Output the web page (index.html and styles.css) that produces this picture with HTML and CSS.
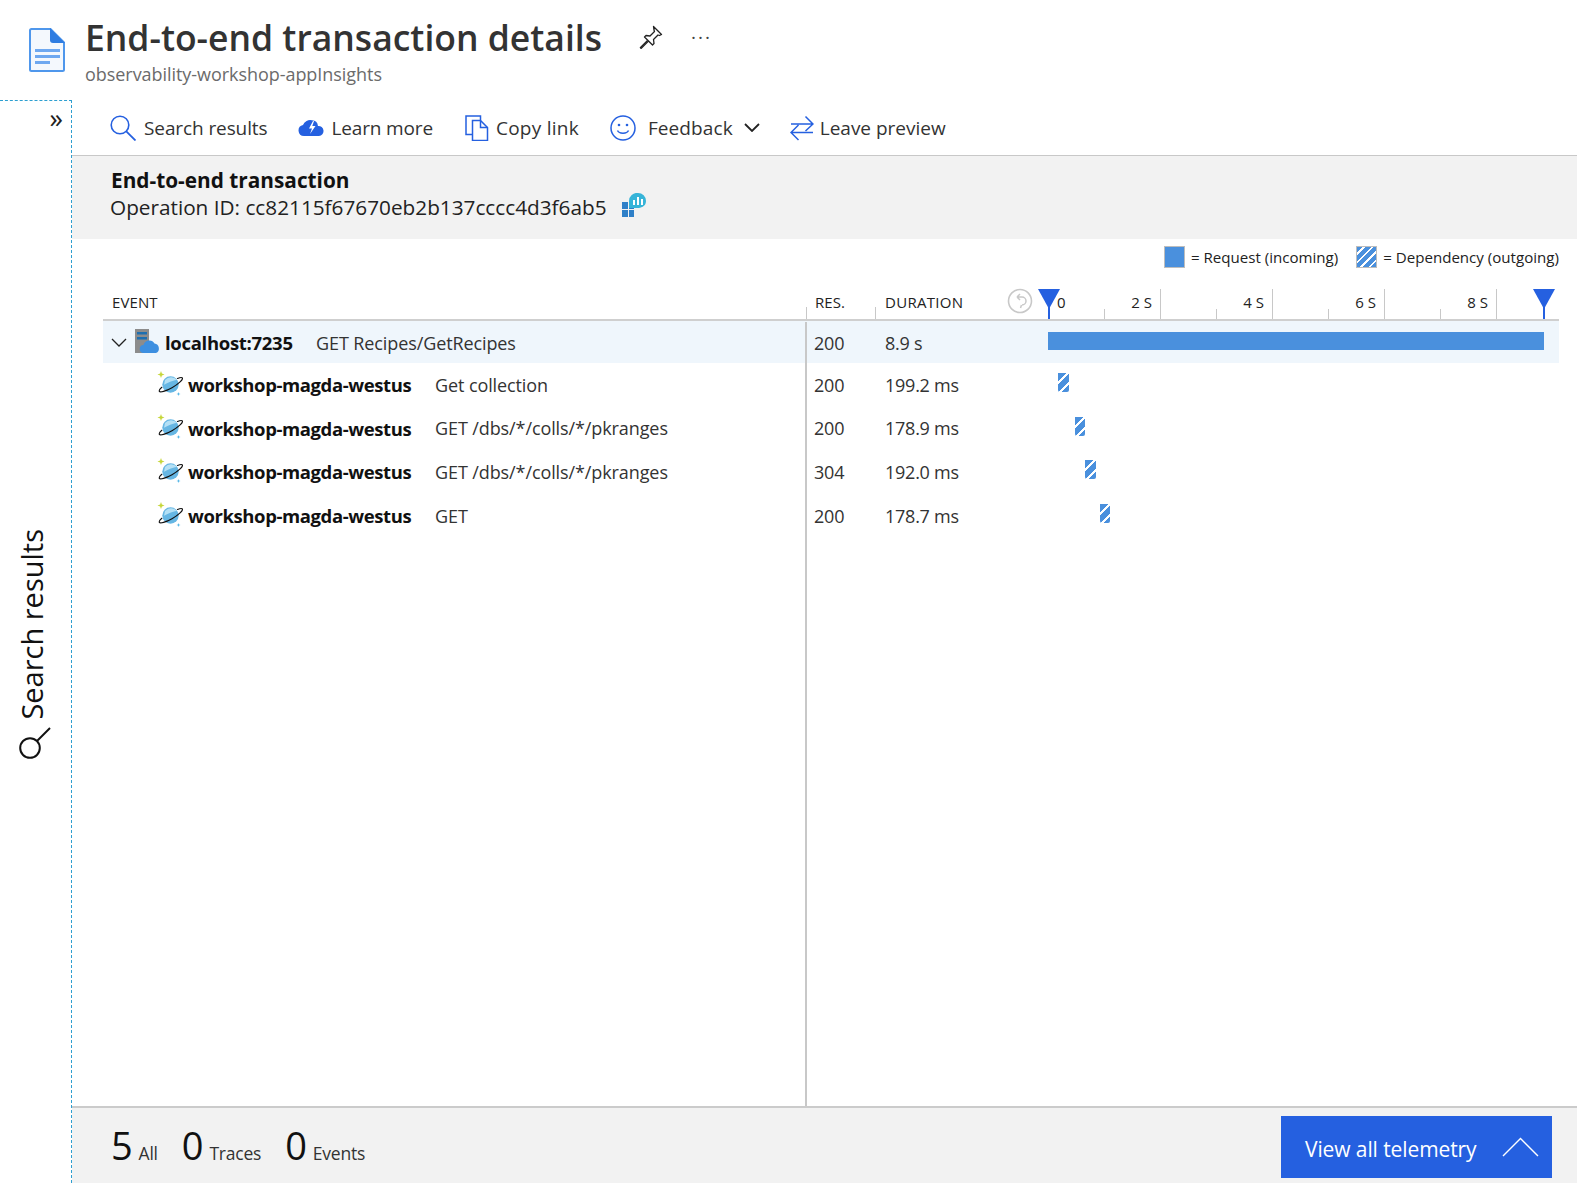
FILE: index.html
```html
<!DOCTYPE html>
<html lang="en">
<head>
<meta charset="utf-8">
<title>End-to-end transaction details</title>
<link rel="stylesheet" href="styles.css">
</head>
<body>
<svg class="defs" width="0" height="0" aria-hidden="true">
  <defs>
    <symbol id="cosmos" viewBox="0 0 26 26">
      <circle cx="13.500" cy="13.500" r="8.200" fill="#66b6e3"/>
      <path d="M8 9a8.200 8.200 0 0 1 12-.2c-3.500.8-8.500 2.200-13 5z" fill="#b4e0f5"/>
      <path d="M20.500 7.500c2.800-1.100 4.600-1.100 4.900-.4.700 1.600-4.100 6-10.400 9.600-6.300 3.600-12 5-12.700 3.600-.4-.8.500-2.200 2.500-4" fill="none" stroke="#111" stroke-width="1.200" stroke-linecap="round"/>
      <path d="M4 0l.9 2.600 2.600.9-2.600.9-.9 2.600-.9-2.600-2.600-.9 2.600-.9z" fill="#c6d63a"/>
      <path d="M21.500 21l.5 1.500 1.500.5-1.500.5-.5 1.500-.5-1.500-1.500-.5 1.500-.5z" fill="#50b4e6"/>
    </symbol>
  </defs>
</svg>

<header class="page-head">
  <svg class="doc-icon" width="36" height="44" viewBox="0 0 36 44">
    <path d="M2.500 1h19L35 14.500V41.500a1.500 1.500 0 0 1-1.500 1.500h-31A1.500 1.500 0 0 1 1 41.500V2.500A1.500 1.500 0 0 1 2.500 1z" fill="#f4f8fd" stroke="#4f97ec" stroke-width="2"/>
    <path d="M21 0l15 15H24a3 3 0 0 1-3-3z" fill="#2f7de1"/>
    <path d="M6 21h25v3H6zM6 27h25v3H6zM6 33h15v3H6z" fill="#6ea8f0"/>
  </svg>
  <div class="head-text">
    <div class="title-row">
      <h1 class="page-title">End-to-end transaction details</h1>
      <svg class="pin-icon" width="24" height="24" viewBox="0 0 24 24">
        <path d="M14.500 1.500l8 8-2 1-1.500-.5-4.500 4.500.5 4-1.500 1.500-4-4-7.500 7.500 7.500-7.500-4-4 1.500-1.500 4 .5 4.500-4.500-.5-1.500z" fill="none" stroke="#222" stroke-width="1.300" stroke-linejoin="round"/>
        <path d="M1 23l7.500-7.500" stroke="#222" stroke-width="1.300"/>
      </svg>
      <span class="more-dots">···</span>
    </div>
    <div class="subtitle">observability-workshop-appInsights</div>
  </div>
</header>

<div class="workspace">
  <aside class="side-panel">
    <span class="side-expand">»</span>
    <div class="side-label">
      <svg width="32" height="32" viewBox="0 0 32 32" class="side-search">
        <circle cx="11" cy="21" r="9.800" fill="none" stroke="#111" stroke-width="2"/>
        <path d="M18 14L31 1" stroke="#111" stroke-width="2"/>
      </svg>
      <span class="side-text">Search results</span>
    </div>
  </aside>

  <main class="content">
    <nav class="toolbar">
      <span class="tool tool-search">
        <svg width="26" height="26" viewBox="0 0 26 26"><circle cx="10" cy="10" r="8.800" fill="none" stroke="#2560e0" stroke-width="1.600"/><path d="M16.300 16.300L25.500 25.500" stroke="#2560e0" stroke-width="1.800"/></svg>
        Search results
      </span>
      <span class="tool tool-learn">
        <svg width="26" height="16" viewBox="0 0 26 16"><path d="M6 16a5.500 5.500 0 0 1-1-10.900A7.500 7.500 0 0 1 14 .3a6.500 6.500 0 0 1 6 5.700A5 5 0 0 1 21 16z" fill="#2560e0"/><path d="M15 1l-4 7.500h3L12 14l5.500-8h-3.200L16 1z" fill="#fff"/></svg>
        Learn more
      </span>
      <span class="tool tool-copy">
        <svg width="24" height="26" viewBox="0 0 24 26"><path d="M15.500 5V1H5.500L1 1v18.500h6.500" fill="none" stroke="#2560e0" stroke-width="1.500"/><path d="M7.500 5.500h8l7 7v13h-15z" fill="#fff" stroke="#2560e0" stroke-width="1.500"/><path d="M15.500 5.500v7h7" fill="none" stroke="#2560e0" stroke-width="1.500"/></svg>
        Copy link
      </span>
      <span class="tool tool-feedback">
        <svg width="26" height="26" viewBox="0 0 26 26"><circle cx="13" cy="13" r="12" fill="none" stroke="#2560e0" stroke-width="1.500"/><circle cx="9" cy="10" r="1.300" fill="#2560e0"/><circle cx="17" cy="10" r="1.300" fill="#2560e0"/><path d="M7.500 15.500c1.500 3.500 9.500 3.500 11 0" fill="none" stroke="#2560e0" stroke-width="1.500"/></svg>
        <span class="feedback-text">Feedback</span>
        <svg class="feedback-caret" width="16" height="9" viewBox="0 0 16 9"><path d="M1 1l7 7 7-7" fill="none" stroke="#222" stroke-width="1.800"/></svg>
      </span>
      <span class="tool tool-leave">
        <svg width="24" height="26" viewBox="0 0 24 26"><path d="M1 9h21.500M15.500 1.500L23 9l-7.500 7M23 17.500H1.500M8.500 10L1 17.500 8.500 25" fill="none" stroke="#2560e0" stroke-width="1.500"/></svg>
        Leave preview
      </span>
    </nav>

    <section class="summary">
      <div class="summary-title">End-to-end transaction</div>
      <div class="summary-id">
        Operation ID: cc82115f67670eb2b137cccc4d3f6ab5
        <svg width="25" height="24" viewBox="0 0 25 24">
          <path d="M1 9h6v7H1zM8 9h5v7H8zM1 17h6v7H1zM8 17h5v7H8z" fill="#2f80c8"/>
          <path d="M17 0a8 8 0 0 1 8 8c0 6-6 7-8 7H8V8a8 8 0 0 1 9-8z" fill="#37b4d8"/>
          <path d="M12 7h2v5h-2zM16 4h2v8h-2zM20 6h2v6h-2z" fill="#fff"/>
        </svg>
      </div>
    </section>

    <section class="details">
      <div class="legend">
        <span class="swatch swatch-request"></span><span class="legend-text">= Request (incoming)</span>
        <span class="swatch swatch-dep"></span><span class="legend-text">= Dependency (outgoing)</span>
      </div>

      <div class="grid-row grid-head">
        <div class="head-cell head-event">EVENT</div>
        <div class="head-cell head-sep">RES.</div>
        <div class="head-cell head-sep head-duration">
          DURATION
          <svg class="reset-icon" width="26" height="26" viewBox="0 0 26 26"><circle cx="13" cy="13" r="11.500" fill="none" stroke="#c8c8c8" stroke-width="1.600"/><path d="M10 9h5a4 4 0 0 1 0 8M10 9l3-3M10 9l3 3M14.500 17l-1 3" fill="none" stroke="#c8c8c8" stroke-width="1.500"/></svg>
        </div>
        <div class="ruler">
          <div class="seg"><span class="half"><span class="tick-label first">0</span></span><span class="half label-end"><span class="tick-label">2 S</span></span></div>
          <div class="seg"><span class="half"></span><span class="half label-end"><span class="tick-label">4 S</span></span></div>
          <div class="seg"><span class="half"></span><span class="half label-end"><span class="tick-label">6 S</span></span></div>
          <div class="seg"><span class="half"></span><span class="half label-end"><span class="tick-label">8 S</span></span></div>
          <span class="handle handle-start"></span>
          <span class="handle handle-end"></span>
        </div>
      </div>

      <div class="rows">
        <div class="grid-row row row-selected">
          <div class="cell-event">
            <svg class="chevron" width="16" height="9" viewBox="0 0 16 9"><path d="M1 1l7 7 7-7" fill="none" stroke="#222" stroke-width="1.300"/></svg>
            <svg class="server-icon" width="25" height="25" viewBox="0 0 25 25">
              <rect x="0" y="0" width="14" height="24" fill="#8c8c8c"/>
              <rect x="2" y="3" width="10" height="2.500" fill="#1e6fb0"/>
              <rect x="2" y="8" width="10" height="2.500" fill="#1e6fb0"/>
              <path d="M9 24a4 4 0 0 1-.5-8 6 6 0 0 1 11-1.500A5 5 0 0 1 21 24z" fill="#3d8fe0"/>
            </svg>
            <span class="name name-root">localhost:7235</span>
            <span class="op">GET Recipes/GetRecipes</span>
          </div>
          <div class="cell">200</div>
          <div class="cell">8.9 s</div>
          <div class="track"><span class="bar bar-request"></span></div>
        </div>

        <div class="grid-row row">
          <div class="cell-event child"><svg class="db-icon" width="26" height="26"><use href="#cosmos"/></svg><span class="name">workshop-magda-westus</span><span class="op">Get collection</span></div>
          <div class="cell">200</div>
          <div class="cell">199.2 ms</div>
          <div class="track"><span class="bar bar-dep" style="margin-left:10px;width:11px"></span></div>
        </div>
        <div class="grid-row row">
          <div class="cell-event child"><svg class="db-icon" width="26" height="26"><use href="#cosmos"/></svg><span class="name">workshop-magda-westus</span><span class="op">GET /dbs/*/colls/*/pkranges</span></div>
          <div class="cell">200</div>
          <div class="cell">178.9 ms</div>
          <div class="track"><span class="bar bar-dep" style="margin-left:27px;width:10px"></span></div>
        </div>
        <div class="grid-row row">
          <div class="cell-event child"><svg class="db-icon" width="26" height="26"><use href="#cosmos"/></svg><span class="name">workshop-magda-westus</span><span class="op">GET /dbs/*/colls/*/pkranges</span></div>
          <div class="cell">304</div>
          <div class="cell">192.0 ms</div>
          <div class="track"><span class="bar bar-dep" style="margin-left:37px;width:11px"></span></div>
        </div>
        <div class="grid-row row">
          <div class="cell-event child"><svg class="db-icon" width="26" height="26"><use href="#cosmos"/></svg><span class="name">workshop-magda-westus</span><span class="op">GET</span></div>
          <div class="cell">200</div>
          <div class="cell">178.7 ms</div>
          <div class="track"><span class="bar bar-dep" style="margin-left:52px;width:10px"></span></div>
        </div>
        <div class="grid-row filler"><div class="cell-event"></div></div>
      </div>
    </section>

    <footer class="footer">
      <div class="counts">
        <span class="count"><b>5</b>All</span>
        <span class="count"><b>0</b>Traces</span>
        <span class="count"><b>0</b>Events</span>
      </div>
      <button class="telemetry-btn" type="button">
        <span class="telemetry-text">View all telemetry</span>
        <svg width="37" height="20" viewBox="0 0 37 20"><path d="M1 19L18.500 1.500 36 19" fill="none" stroke="#fff" stroke-width="1.400"/></svg>
      </button>
    </footer>
  </main>
</div>
</body>
</html>
```
FILE: styles.css
```css
* { box-sizing: border-box; }
html, body { margin: 0; height: 100%; }
body {
  width: 1577px;
  height: 1183px;
  overflow: hidden;
  display: flex;
  flex-direction: column;
  background: #fff;
  color: #1a1a1a;
  font-family: "Open Sans", "Noto Sans", "Liberation Sans", sans-serif;
}
.defs { position: absolute; }

/* page head */
.page-head {
  height: 100px;
  flex: none;
  display: flex;
  align-items: flex-start;
  padding-left: 29px;
}
.doc-icon { margin-top: 28px; flex: none; }
.head-text { margin-left: 20px; padding-top: 11px; }
.title-row { display: flex; align-items: center; height: 51px; }
.page-title {
  margin: 0;
  font-size: 35.500px;
  line-height: 50px;
  font-weight: 600;
  color: #333;
  white-space: nowrap;
}
.pin-icon { margin-left: 37px; }
.more-dots { margin-left: 28px; font-size: 19px; color: #444; letter-spacing: 2px; }
.subtitle { font-size: 18px; line-height: 24px; color: #6b6b6b; letter-spacing: -0.05px; }

/* workspace */
.workspace { flex: 1; display: flex; min-height: 0; }
.side-panel {
  width: 72px;
  flex: none;
  border-top: 1px dashed #2d9fd0;
  border-right: 1px dashed #2d9fd0;
  display: flex;
  flex-direction: column;
  position: relative;
}
.side-expand {
  position: absolute;
  top: 0;
  right: 8px;
  font-size: 27px;
  line-height: 34px;
  color: #222;
}
.side-label {
  flex: 1;
  display: flex;
  flex-direction: column-reverse;
  align-items: center;
  justify-content: center;
  padding: 4px 8px 0 0;
  gap: 8px;
}
.side-text {
  writing-mode: vertical-rl;
  transform: rotate(180deg);
  font-size: 29px;
  line-height: 34px;
  color: #111;
  white-space: nowrap;
}
.side-search { margin-left: 6px; }

.content { flex: 1; min-width: 0; display: flex; flex-direction: column; }

/* toolbar */
.toolbar {
  height: 56px;
  flex: none;
  display: flex;
  align-items: center;
  padding: 0 0 0 38px;
  border-bottom: 1px solid #c8c8c8;
}
.tool {
  display: inline-flex;
  align-items: center;
  gap: 8px;
  font-size: 19px;
  color: #333;
  white-space: nowrap;
  letter-spacing: -0.1px;
}
.tool-learn { margin-left: 31px; gap: 7px; letter-spacing: -0.15px; }
.tool-copy { margin-left: 32px; gap: 7px; letter-spacing: 0.25px; }
.tool-feedback { margin-left: 31px; gap: 12px; letter-spacing: 0.1px; }
.tool-leave { margin-left: 30px; gap: 6px; letter-spacing: 0; }
.feedback-caret { margin-left: -1px; }

/* summary */
.summary {
  height: 83px;
  flex: none;
  background: #f2f2f2;
  padding: 11px 0 0 39px;
}
.summary-title { font-size: 20.800px; line-height: 27px; font-weight: 700; color: #111; }
.summary-id { display: flex; align-items: center; gap: 14px; font-size: 20.750px; line-height: 27px; color: #222; margin-left: -1px; }
.summary-id svg { margin-top: -6px; }

/* details */
.details {
  flex: 1;
  min-height: 0;
  display: flex;
  flex-direction: column;
  padding: 0 18px 0 31px;
}
.legend {
  height: 50px;
  flex: none;
  padding-top: 7px;
  display: flex;
  justify-content: flex-end;
  align-items: flex-start;
}
.swatch {
  width: 21px;
  height: 22px;
  border: 1px solid #bdbdbd;
  flex: none;
}
.swatch-request { background: #4a90dd; }
.swatch-dep {
  margin-left: 18px;
  background: repeating-linear-gradient(135deg, #4a90dd 0 4px, #fff 4px 6px);
}
.legend-text { margin-left: 6px; font-size: 15.100px; line-height: 22px; color: #222; }

.grid-row {
  display: grid;
  grid-template-columns: 704px 69px 172px 511px;
}
.grid-head {
  height: 32px;
  flex: none;
  border-bottom: 2px solid #cfcfcf;
  font-size: 15px;
  color: #222;
}
.head-cell { display: flex; align-items: flex-end; padding-bottom: 7px; line-height: 20px; position: relative; }
.head-event { padding-left: 9px; letter-spacing: 0.1px; }
.head-sep { padding-left: 8px; letter-spacing: 0.1px; }
.head-duration { padding-left: 9px; letter-spacing: 0.3px; }
.head-sep::before {
  content: "";
  position: absolute;
  left: -1px;
  bottom: 0;
  height: 12px;
  border-left: 1px solid #c8c8c8;
}
.reset-icon { position: absolute; left: 131px; top: -1px; }

.ruler { display: flex; position: relative; padding-left: 1px; }
.seg { width: 112px; flex: none; display: flex; border-right: 1px solid #c8c8c8; }
.half { flex: 0 0 50%; display: flex; align-items: flex-end; padding-bottom: 7px; position: relative; }
.half:first-child::after {
  content: "";
  position: absolute;
  right: 0;
  bottom: 0;
  height: 10px;
  border-right: 1px solid #c8c8c8;
}
.label-end { justify-content: flex-end; padding-right: 8px; }
.tick-label { font-size: 15px; line-height: 20px; color: #222; }
.tick-label.first { margin-left: 8px; }
.handle {
  position: absolute;
  top: 0;
  width: 22px;
  height: 30px;
  background:
    linear-gradient(#2560e0, #2560e0) center 18px / 2px 12px no-repeat;
}
.handle::before {
  content: "";
  position: absolute;
  left: 0;
  top: 0;
  border-left: 11px solid transparent;
  border-right: 11px solid transparent;
  border-top: 20px solid #2560e0;
}
.handle-start { left: -10px; }
.handle-end { left: 485px; }

/* rows */
.rows { flex: 1; min-height: 0; display: flex; flex-direction: column; }
.row { height: 43.600px; flex: none; font-size: 18px; color: #333; }
.row-selected { height: 42px; background: #eff6fc; padding-top: 1px; }
.filler { flex: 1; }
.cell-event {
  display: flex;
  align-items: center;
  border-right: 2px solid #c8c8c8;
  padding-left: 8px;
  white-space: nowrap;
}
.cell-event.child { padding-left: 54px; }
.chevron { flex: none; }
.server-icon { margin-left: 8px; flex: none; margin-top: -2px; }
.db-icon { flex: none; margin-top: -2px; }
.cell { display: flex; align-items: center; padding-left: 7px; letter-spacing: -0.2px; }
.cell + .cell { padding-left: 9px; letter-spacing: -0.25px; }
.name { font-weight: 700; color: #111; font-size: 18.500px; letter-spacing: -0.4px; margin-left: 5px; width: 247px; flex: none; }
.name-root { width: 151px; letter-spacing: -0.3px; }
.op { letter-spacing: -0.1px; }

.track { display: flex; align-items: flex-start; padding-top: 10px; }
.bar { display: block; height: 19px; }
.bar-request { width: 496px; height: 18px; background: #4a90dd; }
.bar-dep {
  background: repeating-linear-gradient(135deg, #4a90dd 0 6px, #fff 6px 8px);
  border-radius: 0 0 2px 2px;
}

/* footer */
.footer {
  height: 77px;
  flex: none;
  background: #f2f2f2;
  border-top: 2px solid #cbcbcb;
  display: flex;
  justify-content: space-between;
  align-items: flex-start;
  padding: 8px 25px 0 39px;
}
.counts { display: flex; gap: 24px; align-items: baseline; padding-top: 3px; }
.count { font-size: 17.500px; color: #333; letter-spacing: -0.2px; }
.count b { font-size: 38px; line-height: 52px; font-weight: 400; color: #111; margin-right: 6px; }
.telemetry-btn {
  width: 271px;
  height: 62px;
  border: 0;
  background: #2560e0;
  color: #fff;
  font: inherit;
  font-size: 21px;
  letter-spacing: -0.1px;
  display: flex;
  align-items: center;
  justify-content: space-between;
  padding: 0 13px 0 24px;
}
.telemetry-text { padding-top: 3px; }
```
